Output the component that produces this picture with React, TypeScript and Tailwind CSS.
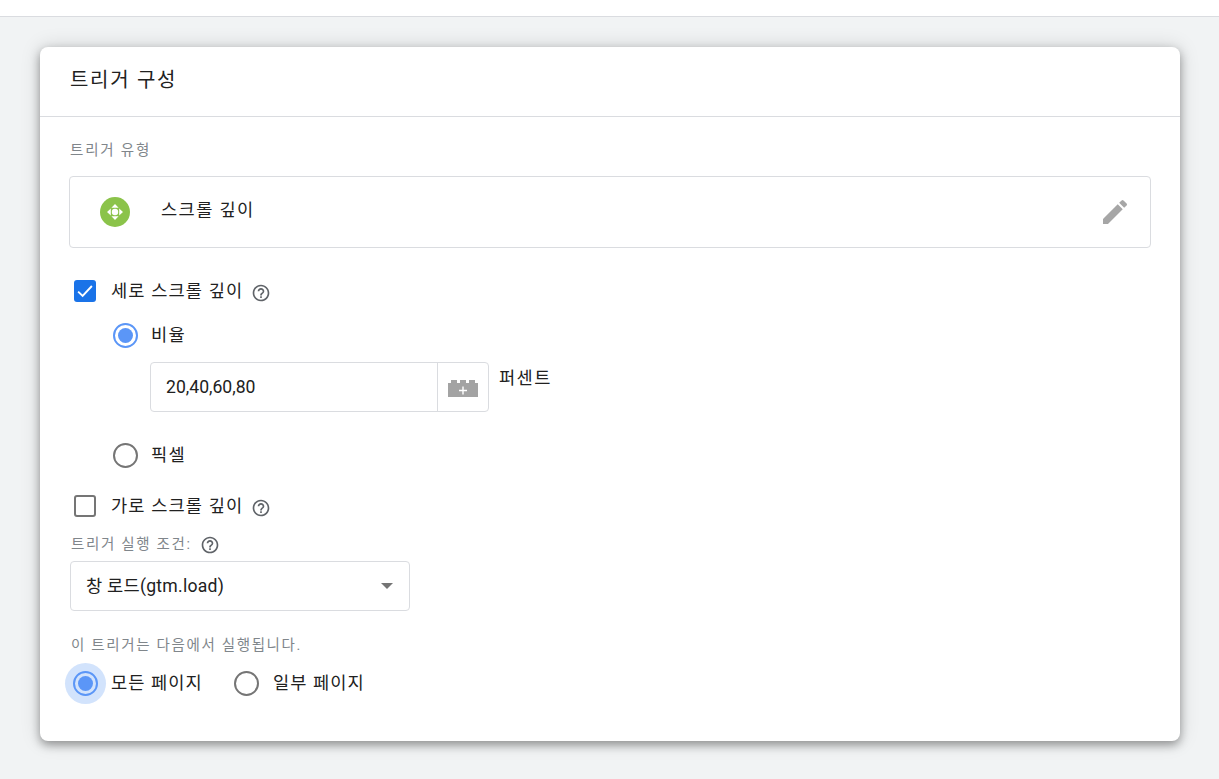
const FONT = "font-['Roboto','Noto_Sans_CJK_KR',sans-serif]";

function HelpIcon({ className }: { className?: string }) {
  return (
    <svg width="20" height="20" viewBox="0 0 24 24" fill="#5f6368" className={className}>
      <path d="M11 18h2v-2h-2v2zm1-16C6.48 2 2 6.48 2 12s4.48 10 10 10 10-4.48 10-10S17.52 2 12 2zm0 18c-4.41 0-8-3.59-8-8s3.59-8 8-8 8 3.59 8 8-3.59 8-8 8zm0-14c-2.21 0-4 1.79-4 4h2c0-1.1.9-2 2-2s2 .9 2 2c0 2-3 1.75-3 5h2c0-2.25 3-2.5 3-5 0-2.21-1.79-4-4-4z" />
    </svg>
  );
}

function Radio({ checked }: { checked?: boolean }) {
  return (
    <span
      className={
        checked
          ? "flex h-[25px] w-[25px] shrink-0 items-center justify-center rounded-full border-2 border-[#5b96f7]"
          : "flex h-[25px] w-[25px] shrink-0 items-center justify-center rounded-full border-2 border-[#757575]"
      }
    >
      {checked && <span className="h-[15px] w-[15px] rounded-full bg-[#5b96f7]" />}
    </span>
  );
}

function ScrollIcon() {
  return (
    <span className="flex h-[30px] w-[30px] items-center justify-center rounded-full bg-[#8bc34a]">
      <svg width="20" height="20" viewBox="0 0 20 20" fill="#fff">
        <circle cx="10" cy="10" r="3.2" />
        <path d="M10 2l3.6 3.8H6.4zM10 18l-3.6-3.8h7.2zM2 10l3.8-3.6v7.2zM18 10l-3.8 3.6V6.4z" />
      </svg>
    </span>
  );
}

export default function App() {
  return (
    <div className={`${FONT} min-h-[779px] bg-[#f1f3f4] text-[#212121]`}>
      <div className="h-[17px] border-b border-[#dadce0] bg-white" />

      <div className="pl-10 pr-[39px] pt-[30px]">
        <div className="h-[694px] rounded-lg bg-white shadow-[0_4px_10px_rgba(0,0,0,0.35),0_0_20px_rgba(0,0,0,0.15)]">
          {/* 헤더 */}
          <div className="flex h-[70px] items-center border-b border-[#dadce0] pl-[30px] pb-[3px] text-[20px] leading-none tracking-[1.7px]">
            트리거 구성
          </div>

          <div className="px-[29px] pt-[25px]">
            <div className="pl-px text-[14.5px] leading-[18px] tracking-[1.8px] text-[#80868b]">트리거 유형</div>

            {/* 트리거 유형 카드 */}
            <div className="mt-4 flex h-[72px] items-center rounded border border-[#dadce0] pl-[30px] pr-[19px]">
              <ScrollIcon />
              <span className="ml-[31px] pb-1 text-[17.6px] tracking-[1.4px]">스크롤 깊이</span>
              <svg width="32" height="32" viewBox="0 0 24 24" fill="#a6a6a6" className="ml-auto">
                <path d="M3 17.25V21h3.75L17.81 9.94l-3.75-3.75L3 17.25zM20.71 7.04a1 1 0 0 0 0-1.41l-2.34-2.34a1 1 0 0 0-1.41 0l-1.83 1.83 3.75 3.75 1.83-1.83z" />
              </svg>
            </div>

            {/* 세로 */}
            <div className="mt-[31px] flex h-6 items-center pl-[5px]">
              <span className="flex h-[22px] w-[22px] items-center justify-center rounded-[3px] bg-[#1a73e8]">
                <svg width="20" height="20" viewBox="0 0 16 16" fill="none" stroke="#fff" strokeWidth="1.5">
                  <path d="M2.5 8.5l3.6 3.5 7.4-8" />
                </svg>
              </span>
              <span className="ml-[15px] mt-px text-[17.6px] tracking-[1.15px]">세로 스크롤 깊이</span>
              <HelpIcon className="ml-[8px] mt-[3px]" />
            </div>

            <div className="mt-5 flex h-[25px] items-center pl-11">
              <Radio checked />
              <span className="ml-[13px] text-[17.6px] tracking-[1.3px]">비율</span>
            </div>

            <div className="mt-[14px] flex items-start pl-[81px]">
              <div className="flex h-[50px] w-[339px] items-center rounded border border-[#dadce0]">
                <span className="flex-1 pl-[15px] text-[17.6px]">20,40,60,80</span>
                <span className="flex h-full w-[51px] items-center justify-center border-l border-[#dadce0]">
                  <svg width="30" height="20" viewBox="0 0 30 20" fill="#a3a3a3">
                    <path d="M0 6h3V3h6v3h3V3h6v3h3V3h6v3h3v14H0z" />
                    <path d="M14.3 9.5h1.4v3.3H19v1.4h-3.3v3.3h-1.4v-3.3H11v-1.4h3.3z" fill="#fff" />
                  </svg>
                </span>
              </div>
              <span className="ml-[10px] mt-px text-[17.6px] leading-[30px] tracking-[1.4px]">퍼센트</span>
            </div>

            <div className="mt-[31px] flex h-[25px] items-center pl-11">
              <Radio />
              <span className="ml-[13px] text-[17.6px] tracking-[1.3px]">픽셀</span>
            </div>

            {/* 가로 */}
            <div className="mt-[26px] flex h-6 items-center pl-[5px]">
              <span className="h-[22px] w-[22px] rounded-[3px] border-2 border-[#757575]" />
              <span className="ml-[15px] mt-px text-[17.6px] tracking-[1.15px]">가로 스크롤 깊이</span>
              <HelpIcon className="ml-[8px] mt-[3px]" />
            </div>

            <div className="mt-[18px] flex h-[18px] items-center pl-[2px] text-[14.5px] tracking-[1.65px] text-[#80868b]">
              트리거 실행 조건:
              <HelpIcon className="ml-[8px]" />
            </div>

            <div className="mt-[7px] ml-px flex h-[50px] w-[340px] items-center justify-between rounded border border-[#dadce0] pl-[15px] pr-[16px] text-[17.6px] tracking-[0.25px]">
              창 로드(gtm.load)
              <span className="h-0 w-0 border-x-[6px] border-t-[6px] border-x-transparent border-t-[#757575]" />
            </div>

            <div className="mt-[24px] pl-[2px] pt-[2px] text-[14.5px] leading-[18px] tracking-[1.65px] text-[#80868b]">이 트리거는 다음에서 실행됩니다.</div>

            <div className="mt-4 flex h-[25px] items-center pl-[4px] text-[17.6px] tracking-[1.1px]">
              <span className="-mx-2 flex h-[41px] w-[41px] items-center justify-center rounded-full bg-[#d2e3fc]">
                <Radio checked />
              </span>
              <span className="ml-[13px]">모든 페이지</span>
              <span className="ml-[31px]"><Radio /></span>
              <span className="ml-[14px]">일부 페이지</span>
            </div>
          </div>
        </div>
      </div>
    </div>
  );
}
